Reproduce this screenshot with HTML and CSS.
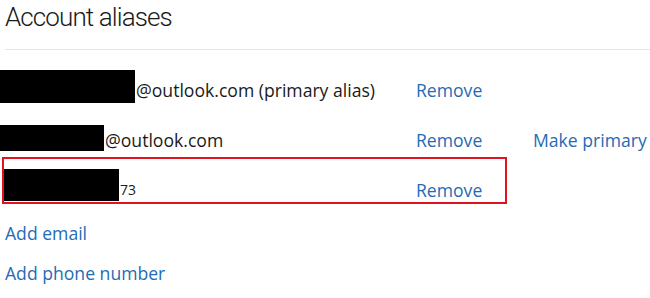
FILE: index.html
```html
<!DOCTYPE html>
<html lang="en">
<head>
  <meta charset="UTF-8" />
  <meta name="viewport" content="width=device-width, initial-scale=1.0"/>
  <title>Account aliases</title>
  <link rel="stylesheet" href="styles.css">
</head>
<body>
  <h1 class="title">Account aliases</h1>

  <div class="aliases">
    <div class="alias">
      <div class="address"><span class="redact redact-1"></span>@outlook.com (primary alias)</div>
      <a class="action" href="#">Remove</a>
    </div>
    <div class="alias">
      <div class="address"><span class="redact redact-2"></span>@outlook.com</div>
      <a class="action" href="#">Remove</a>
      <a class="action" href="#">Make primary</a>
    </div>
    <div class="alias marked">
      <div class="address"><span class="redact redact-3"></span><span class="tail">73</span></div>
      <a class="action" href="#">Remove</a>
    </div>
  </div>

  <div class="add-links">
    <a href="#">Add email</a>
    <a href="#">Add phone number</a>
  </div>
</body>
</html>
```

FILE: styles.css
```css
body {
  margin: 0;
  background: #fff;
  color: #000;
  font-family: 'Open Sans', 'Noto Sans', sans-serif;
  font-size: 17.6px;
}

a {
  color: #1f6bb5;
  text-decoration: none;
}

.title {
  margin: 0 0 0 5px;
  padding-bottom: 15px;
  border-bottom: 1px solid #e6e6e6;
  font-family: Roboto, 'Open Sans', sans-serif;
  font-size: 26px;
  font-weight: 300;
  letter-spacing: -0.9px;
  line-height: 34px;
  color: #1a1a1a;
}

.aliases {
  margin-top: 15px;
}

.alias {
  display: grid;
  grid-template-columns: 416px 117px auto;
  height: 50px;
  line-height: 50px;
  white-space: nowrap;
}

.address {
  color: #1a1a1a;
}

.redact {
  display: inline-block;
  background: #000;
}

.redact-1 {
  width: 135px;
  height: 33px;
  vertical-align: -6px;
  margin-right: 1px;
}

.redact-2 {
  width: 104px;
  height: 26px;
  vertical-align: -4px;
  margin-right: 1px;
}

.redact-3 {
  width: 116px;
  height: 32px;
  vertical-align: -1px;
  margin-left: 3px;
  margin-right: 1px;
}

.tail {
  font-size: 14px;
  vertical-align: 5px;
}

.marked {
  position: relative;
}

.marked::after {
  content: "";
  position: absolute;
  top: -8px;
  left: 2px;
  width: 505px;
  height: 47px;
  box-sizing: border-box;
  border: 2px solid #e0141e;
}

.add-links {
  display: flex;
  flex-direction: column;
  align-items: flex-start;
  margin-top: -2px;
  padding-left: 5px;
  line-height: 40px;
}
```
